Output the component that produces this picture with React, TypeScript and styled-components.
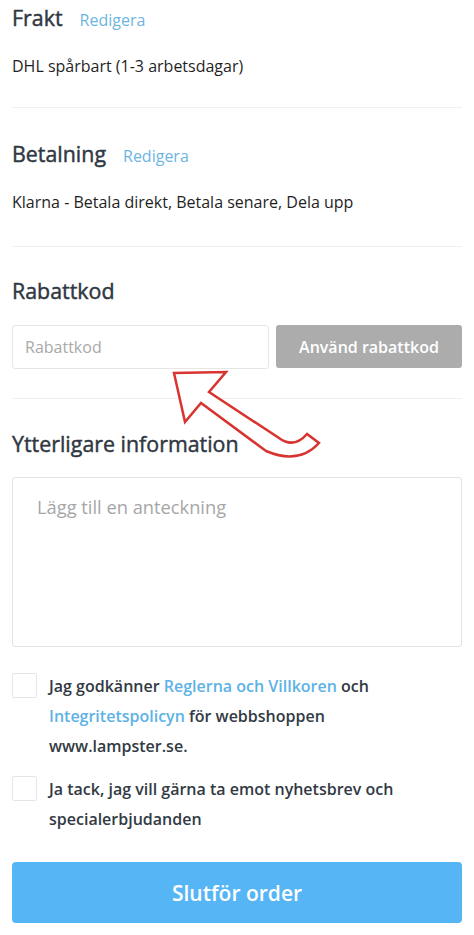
import React from 'react';
import styled, { createGlobalStyle } from 'styled-components';

const GlobalStyle = createGlobalStyle`
  html, body {
    margin: 0;
    padding: 0;
    background: #fff;
  }
  body {
    font-family: "Open Sans", "Noto Sans", sans-serif;
    color: #222;
  }
  * { box-sizing: border-box; }
`;

const Page = styled.div`
  position: relative;
  padding: 4px 12px 12px;
  width: 474px;
`;

const Section = styled.section<{ $top?: number; $bottom?: number }>`
  padding-top: ${p => p.$top ?? 31}px;
  padding-bottom: ${p => p.$bottom ?? 30}px;
  border-bottom: 1px solid #f0f0f0;
`;

const OpenSection = styled.section`
  padding-top: 31px;
  display: flex;
  flex-direction: column;
`;

const HeaderRow = styled.div`
  display: flex;
  align-items: baseline;
  gap: 17px;
`;

/* medium weight: regular face with a thin stroke on top */
const Heading = styled.h2`
  margin: 0;
  font-size: 21.4px;
  line-height: 28px;
  font-weight: 400;
  color: #2f3742;
  -webkit-text-stroke: 0.45px #2f3742;
`;

const EditLink = styled.a`
  font-size: 16px;
  color: #6db5e1;
  text-decoration: none;
  cursor: pointer;
`;

const Summary = styled.p`
  margin: 22px 0 0;
  font-size: 16px;
  line-height: 24px;
  color: #1f1f1f;
`;

const CouponRow = styled.div`
  display: flex;
  gap: 7px;
  margin-top: 20px;
`;

const CouponInput = styled.input`
  flex: 0 0 257px;
  height: 44px;
  padding: 0 12px;
  border: 1px solid #e6e6e6;
  border-radius: 3px;
  font-family: inherit;
  font-size: 16px;
  color: #333;
  outline: none;
  &::placeholder { color: #a9a9a9; }
`;

const GreyButton = styled.button`
  flex: 1;
  height: 43px;
  border: none;
  border-radius: 3px;
  background: #acacac;
  color: #fff;
  font-family: inherit;
  font-size: 16px;
  font-weight: 600;
  cursor: pointer;
`;

const Note = styled.textarea`
  margin-top: 19px;
  height: 170px;
  width: 100%;
  padding: 16px 24px;
  border: 1px solid #e3e3e3;
  border-radius: 3px;
  font-family: inherit;
  font-size: 18.3px;
  line-height: 26px;
  resize: none;
  outline: none;
  &::placeholder { color: #a6a6a6; }
`;

const CheckRow = styled.label<{ $top: number }>`
  display: flex;
  align-items: flex-start;
  gap: 12px;
  margin-top: ${p => p.$top}px;
  cursor: pointer;
`;

const Box = styled.span`
  flex: 0 0 25px;
  height: 25px;
  margin-top: 2px;
  border: 1px solid #e6e6e6;
  border-radius: 2px;
  background: #fff;
`;

const CheckText = styled.span`
  flex: 1;
  font-size: 16px;
  line-height: 30px;
  font-weight: 600;
  color: #323a44;
  padding-right: 4px;
`;

const InlineLink = styled.a`
  color: #5db2e6;
  text-decoration: none;
`;

const SubmitButton = styled.button`
  margin-top: 28px;
  width: 100%;
  height: 61px;
  border: none;
  border-radius: 4px;
  background: #56b5f5;
  color: #fff;
  font-family: inherit;
  font-size: 21px;
  font-weight: 600;
  cursor: pointer;
`;

const Overlay = styled.svg`
  position: absolute;
  left: 0;
  top: 0;
  pointer-events: none;
`;

const Arrow = () => (
  <Overlay width="474" height="935" viewBox="0 0 474 935">
    <path
      d="M174,373 L226,372 L209,392 L279,438 Q294,449 307,434 L319,443 Q299,465 266,451 L201,403 L185,422 Z"
      fill="#fff"
      stroke="#d8332f"
      strokeWidth="2.5"
      strokeLinejoin="miter"
    />
  </Overlay>
);

export default function App() {
  return (
    <Page>
      <GlobalStyle />
      <Section $top={0} $bottom={29}>
        <HeaderRow>
          <Heading>Frakt</Heading>
          <EditLink>Redigera</EditLink>
        </HeaderRow>
        <Summary>DHL spårbart (1-3 arbetsdagar)</Summary>
      </Section>
      <Section $top={32} $bottom={32}>
        <HeaderRow>
          <Heading>Betalning</Heading>
          <EditLink>Redigera</EditLink>
        </HeaderRow>
        <Summary>Klarna - Betala direkt, Betala senare, Dela upp</Summary>
      </Section>
      <Section $top={30} $bottom={29}>
        <Heading>Rabattkod</Heading>
        <CouponRow>
          <CouponInput placeholder="Rabattkod" />
          <GreyButton>Använd rabattkod</GreyButton>
        </CouponRow>
      </Section>
      <OpenSection>
        <Heading>Ytterligare information</Heading>
        <Note placeholder="Lägg till en anteckning" />
        <CheckRow $top={24}>
          <Box />
          <CheckText>
            Jag godkänner <InlineLink>Reglerna och Villkoren</InlineLink> och{' '}
            <InlineLink>Integritetspolicyn</InlineLink> för webbshoppen www.lampster.se.
          </CheckText>
        </CheckRow>
        <CheckRow $top={13}>
          <Box />
          <CheckText>Ja tack, jag vill gärna ta emot nyhetsbrev och specialerbjudanden</CheckText>
        </CheckRow>
        <SubmitButton>Slutför order</SubmitButton>
      </OpenSection>
      <Arrow />
    </Page>
  );
}
